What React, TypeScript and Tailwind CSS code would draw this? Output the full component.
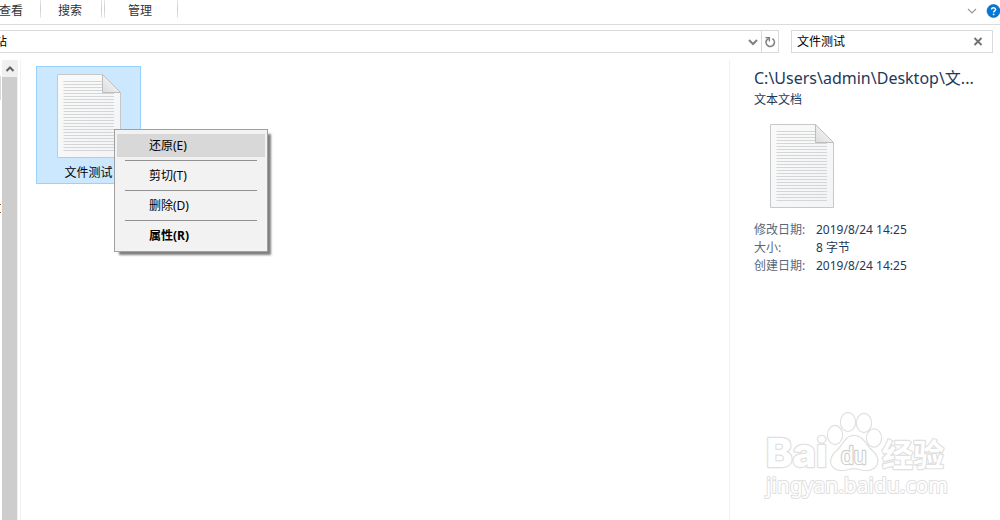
import { Fragment, useState } from "react";

interface MenuItem {
  bold?: boolean;
  id: string;
  label: string;
}

const RIBBON_TABS = [
  { id: "view", label: "查看", className: "-ml-px w-[42px] border-r" },
  { id: "search", label: "搜索", className: "w-[61px] border-r pl-[17px]" },
  { id: "manage", label: "管理", className: "ml-0.5 w-[74px] border-x pl-[23px]" },
];

const MENU_ITEMS: MenuItem[] = [
  { id: "restore", label: "还原(E)" },
  { id: "cut", label: "剪切(T)" },
  { id: "delete", label: "删除(D)" },
  { id: "properties", label: "属性(R)", bold: true },
];

const FILE_DETAILS = [
  { label: "修改日期:", value: "2019/8/24 14:25" },
  { label: "大小:", value: "8 字节" },
  { label: "创建日期:", value: "2019/8/24 14:25" },
];

export default function App() {
  return (
    <div className="flex h-screen flex-col overflow-hidden bg-white font-['Noto_Sans','Noto_Sans_CJK_SC',sans-serif] text-xs text-black">
      <Ribbon />
      <AddressRow />
      <div className="flex min-h-0 flex-1">
        <NavigationEdge />
        <FileList />
        <DetailsPane />
      </div>
    </div>
  );
}

function Ribbon() {
  return (
    <header className="flex h-[25px] shrink-0 items-start justify-between border-b border-[#dadbdc]">
      <nav className="flex">
        {RIBBON_TABS.map((tab) => (
          <button
            key={tab.id}
            className={`flex h-[18px] items-center pt-1 text-left text-[#333] [border-image:linear-gradient(#ececec,#cccccc,#ececec)_1] ${tab.className}`}
            type="button"
          >
            {tab.label}
          </button>
        ))}
      </nav>
      <div className="flex items-center gap-2 pt-1">
        <button aria-label="展开功能区" type="button">
          <svg className="h-3.5 w-3" fill="none" stroke="#999" strokeWidth="1.2" viewBox="0 0 12 14">
            <path d="M2 5l4 4 4-4" />
          </svg>
        </button>
        <button aria-label="帮助" className="overflow-hidden" type="button">
          <svg className="h-3.5 w-3.5" viewBox="0 0 14 14">
            <circle cx="7.5" cy="7" fill="#0078d7" r="6.5" stroke="#0b5cab" strokeWidth=".6" />
            <path
              d="M5.5 5.6C5.5 3.2 9.6 3.2 9.6 5.5C9.6 6.9 7.6 6.8 7.6 8.5"
              fill="none"
              stroke="#fff"
              strokeWidth="1.4"
            />
            <circle cx="7.6" cy="10.4" fill="#fff" r=".9" />
          </svg>
        </button>
      </div>
    </header>
  );
}

function AddressRow() {
  const [query, setQuery] = useState("文件测试");

  return (
    <div className="flex shrink-0 gap-3 pt-[5px] pr-[7px] pb-[7px]">
      <div className="flex h-[23px] flex-1 items-stretch border border-l-0 border-[#d9d9d9]">
        <span className="-ml-[5px] flex-1 leading-[21px]">站</span>
        <button aria-label="历史记录" className="grid w-4 place-items-center" type="button">
          <svg className="h-3 w-3" fill="none" stroke="#808080" strokeWidth="2" viewBox="0 0 12 12">
            <path d="M2 4l4 4 4-4" />
          </svg>
        </button>
        <button
          aria-label="刷新"
          className="grid w-[17px] place-items-center border-l border-[#d9d9d9]"
          type="button"
        >
          <svg className="h-3 w-3" fill="none" stroke="#808080" strokeWidth="1.6" viewBox="0 0 12 12">
            <path d="M8.4 2.6A4.2 4.2 0 1 1 2.4 4.4L4.8 2.2" />
            <path d="M1.4 1.6H5.4V5.6" strokeWidth="1.4" />
          </svg>
        </button>
      </div>
      <div className="flex h-[23px] w-[202px] items-stretch border border-[#d9d9d9]">
        <input
          aria-label="搜索"
          className="min-w-0 flex-1 pl-[5px] outline-none"
          type="text"
          value={query}
          onChange={(event) => setQuery(event.target.value)}
        />
        <button
          aria-label="清除"
          className="grid w-7 place-items-center"
          type="button"
          onClick={() => setQuery("")}
        >
          <svg className="h-2.5 w-2.5" fill="none" stroke="#707070" strokeWidth="1.8" viewBox="0 0 10 10">
            <path d="M1.5 1l7 7M8.5 1l-7 7" />
          </svg>
        </button>
      </div>
    </div>
  );
}

function NavigationEdge() {
  return (
    <aside className="flex w-[21px] shrink-0 border-r border-[#f2f2f2]">
      <div className="flex w-0.5 flex-col">
        <span className="mt-4 h-6 w-px bg-[#d9d9d9]" />
        <span className="mt-[104px] h-px w-px bg-[#a04a10]" />
        <span className="mt-[7px] h-px w-px bg-[#a04a10]" />
      </div>
      <div className="flex w-4 flex-col bg-[#f0f0f0]">
        <button aria-label="向上滚动" className="grid h-[17px] place-items-center" type="button">
          <svg className="h-2.5 w-2.5" fill="none" stroke="#606060" strokeWidth="2" viewBox="0 0 10 10">
            <path d="M1.5 7L5 3.5 8.5 7" />
          </svg>
        </button>
        <div className="mr-px flex-1 bg-[#cdcdcd]" />
      </div>
    </aside>
  );
}

function FileList() {
  return (
    <main className="min-w-0 flex-1 pt-1.5 pl-[15px]">
      <div className="relative w-[105px]">
        <button
          className="flex h-[118px] w-full flex-col items-center border border-[#99d1ff] bg-[#cce8ff] pt-[7px]"
          type="button"
        >
          <TextFileIcon />
          <span className="mt-1.5 leading-[18px]">文件测试</span>
        </button>
        <ContextMenu />
      </div>
    </main>
  );
}

function ContextMenu() {
  return (
    <div
      className="absolute top-[63px] left-[78px] w-[154px] border border-[#a0a0a0] bg-[#f2f2f2] px-0.5 py-1 shadow-[4px_4px_2px_-1px_rgba(0,0,0,0.5)]"
      role="menu"
    >
      {MENU_ITEMS.map((item, index) => (
        <Fragment key={item.id}>
          {index > 0 && <div className="mx-2 my-[3px] h-px bg-[#919191]" role="separator" />}
          <button
            className={`block h-[23px] w-full pl-8 text-left leading-[23px] ${
              index === 0 ? "bg-[#d8d8d8]" : ""
            } ${item.bold ? "font-bold" : ""}`}
            role="menuitem"
            type="button"
          >
            {item.label}
          </button>
        </Fragment>
      ))}
    </div>
  );
}

function DetailsPane() {
  return (
    <aside className="relative w-[271px] shrink-0 border-l border-[#f0f0f0] pt-[7px] pl-6 text-[#1e395b]">
      <h1 className="text-base leading-[22px] whitespace-nowrap">C:\Users\admin\Desktop\文...</h1>
      <p className="mt-0.5 leading-[18px]">文本文档</p>
      <div className="mt-[15px] pl-4">
        <TextFileIcon />
      </div>
      <dl className="mt-[13px] grid grid-cols-[62px_1fr] leading-[18px]">
        {FILE_DETAILS.map((detail) => (
          <Fragment key={detail.label}>
            <dt className="text-[#5a6779]">{detail.label}</dt>
            <dd>{detail.value}</dd>
          </Fragment>
        ))}
      </dl>
      <Watermark />
    </aside>
  );
}

function TextFileIcon() {
  return (
    <svg className="h-[84px] w-16" viewBox="0 0 64 84">
      <defs>
        <linearGradient id="fold" x1="0" x2="1" y1="1" y2="0">
          <stop offset="0" stopColor="#dcdcdc" />
          <stop offset=".6" stopColor="#f0f0f0" />
        </linearGradient>
        <linearGradient id="page" x1="0" x2="1" y1="0" y2="1">
          <stop offset="0" stopColor="#fafafa" />
          <stop offset="1" stopColor="#f3f4f6" />
        </linearGradient>
      </defs>
      <path d="M.5 .5H45.5L63.5 18.5V83.5H.5z" fill="url(#page)" stroke="#c6c8c9" />
      {Array.from({ length: 24 }, (_, line) => (
        <path key={line} d={`M6.5 ${line * 3 + 7.5}H${line < 4 ? 45 : 57}`} stroke="#d3d5d6" />
      ))}
      <path d="M45.5 .5V18.5H63.5z" fill="url(#fold)" stroke="#bdbdbd" />
    </svg>
  );
}

function Watermark() {
  return (
    <svg
      aria-hidden="true"
      className="pointer-events-none absolute right-[50px] bottom-[18px] h-[92px] w-[186px] [paint-order:stroke]"
      fill="#fff"
      stroke="#e0e0e0"
      strokeLinejoin="round"
      strokeWidth="2.4"
      viewBox="0 0 186 92"
    >
      <text className="font-['Inter'] font-extrabold" fontSize="40" x="2" y="57">
        Bai
      </text>
      <ellipse cx="71" cy="25" rx="7" ry="9" />
      <ellipse cx="84" cy="12" rx="7" ry="9" />
      <ellipse cx="100" cy="13" rx="7" ry="9" />
      <ellipse cx="110" cy="28" rx="7" ry="8.5" />
      <path d="M90 26C99 26 101 35 108 41C118 50 113 60 102 60C97 60 94 58 90 58C86 58 83 60 78 60C67 60 63 50 73 41C80 35 81 26 90 26z" />
      <text className="font-['Liberation_Sans']" fontSize="23" stroke="#d0d0d0" x="77" y="54">
        du
      </text>
      <text className="font-['Noto_Sans_CJK_SC'] font-bold" fontSize="31" x="118" y="56">
        经验
      </text>
      <text className="font-['Noto_Sans']" fontSize="21" strokeWidth="2" x="2" y="83">
        jingyan.baidu.com
      </text>
    </svg>
  );
}
